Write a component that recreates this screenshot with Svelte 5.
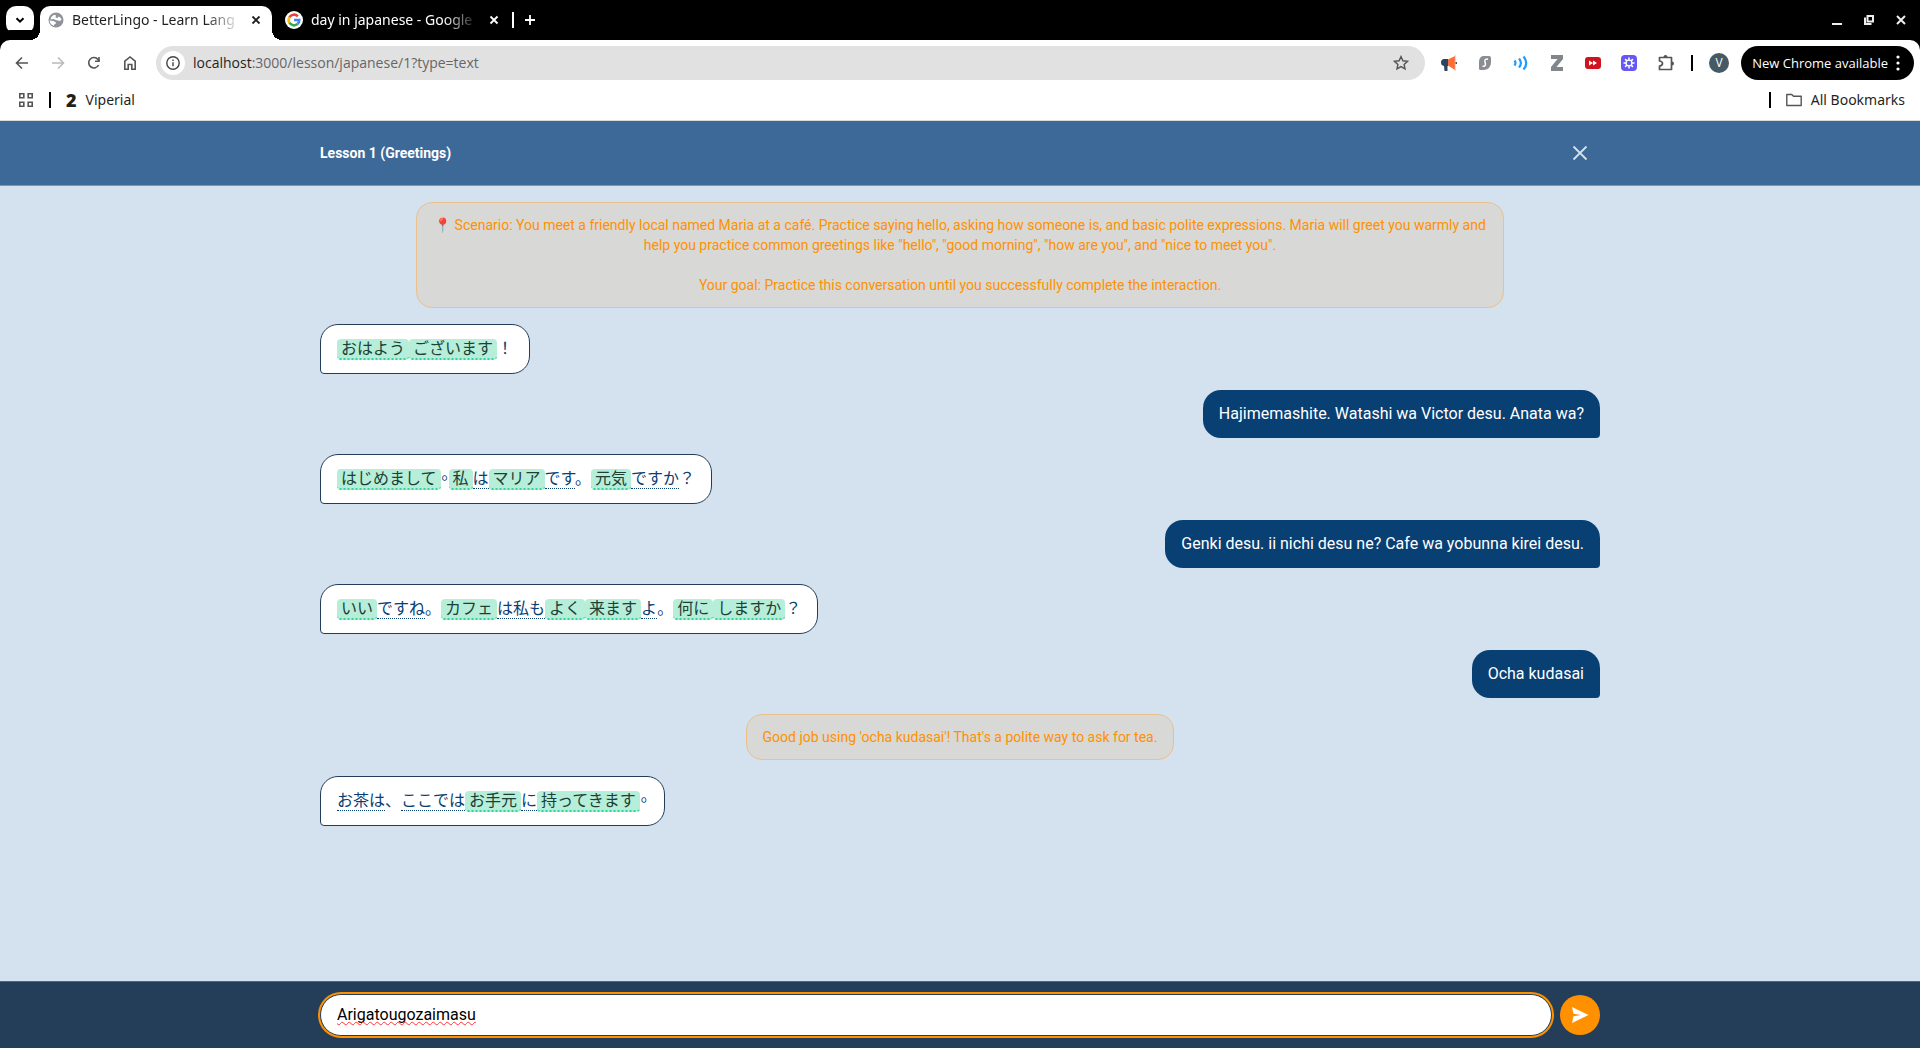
<script>
let draft = 'Arigatougozaimasu';

const bookmarks = ['Viperial'];

// kind: 'word' is a dotted word, 'known' a highlighted one, 'mark' punctuation
const w = text => ({ kind: 'word', text });
const k = text => ({ kind: 'known', text });
const m = text => ({ kind: 'mark', text });
// centred, half width full stop
const stop = { kind: 'stop', text: '。', lang: 'zh-TW' };

const messages = [
    { from: 'system', text: '📍 Scenario: You meet a friendly local named Maria at a café. Practice saying hello, asking how someone is, and basic polite expressions. Maria will greet you warmly and help you practice common greetings like "hello", "good morning", "how are you", and "nice to meet you".\n\nYour goal: Practice this conversation until you successfully complete the interaction.' },
    { from: 'bot', parts: [k('おはよう'), k('ございます'), m('！')] },
    { from: 'user', text: 'Hajimemashite. Watashi wa Victor desu. Anata wa?' },
    { from: 'bot', parts: [k('はじめまして'), stop, k('私'), w('は'), k('マリア'), w('です'), m('。'), k('元気'), w('ですか'), m('？')] },
    { from: 'user', text: 'Genki desu. ii nichi desu ne? Cafe wa yobunna kirei desu.' },
    { from: 'bot', parts: [k('いい'), w('ですね'), m('。'), k('カフェ'), w('は私も'), k('よく'), k('来ます'), w('よ'), m('。'), k('何に'), k('しますか'), m('？')] },
    { from: 'user', text: 'Ocha kudasai' },
    { from: 'system', text: "Good job using 'ocha kudasai'! That's a polite way to ask for tea." },
    { from: 'bot', parts: [w('お茶は'), m('、'), w('ここでは'), k('お手元'), w('に'), k('持ってきます'), stop] },
];

function send () {
    draft = '';
}
</script>

<div class="window">
    <div class="tabs">
        <button class="tab-search" aria-label="Search tabs">
            <svg width="12" height="12" viewBox="0 0 12 12"><path d="M2.5 4.2 6 7.7l3.5-3.5" fill="none" stroke="#000" stroke-width="2"/></svg>
        </button>
        <div class="tab active">
            <svg width="16" height="16" viewBox="0 0 16 16">
                <circle cx="8" cy="8" r="7.5" fill="#8e9299"/>
                <path d="M2.500 7.500Q3 4 6.500 2.800L8 3.500 7.500 5.500l2 .5 1-1.500L13 6l.5 2-2 1-1.500-.5-2.500-.5L6 7z" fill="#fff"/>
                <path d="M1.500 8.500 5.500 9l2.500 1.500-.5 1.500-1.500.5V14Q2 12.500 1.500 8.500z" fill="#fff"/>
            </svg>
            <span class="tab-title">BetterLingo - Learn Lang</span>
            <button class="tab-close" aria-label="Close tab">
                <svg width="10" height="10" viewBox="0 0 10 10"><path d="m1.500 1.500 7 7m0-7-7 7" stroke="currentColor" stroke-width="1.800"/></svg>
            </button>
        </div>
        <div class="tab">
            <svg width="18" height="18" viewBox="0 0 18 18">
                <circle cx="9" cy="9" r="9" fill="#fff"/>
                <g fill="none" stroke-width="2.600">
                    <path d="M4.400 6.300A5.300 5.300 0 0 1 12.800 5.300" stroke="#ea4335"/>
                    <path d="M4.400 11.700a5.300 5.300 0 0 1 0-5.400" stroke="#fbbc05"/>
                    <path d="M12.600 12.900a5.300 5.300 0 0 1-8.200-1.200" stroke="#34a853"/>
                    <path d="M9 9h5.300a5.300 5.300 0 0 1-1.700 3.900" stroke="#4285f4"/>
                </g>
            </svg>
            <span class="tab-title">day in japanese - Google</span>
            <button class="tab-close" aria-label="Close tab">
                <svg width="10" height="10" viewBox="0 0 10 10"><path d="m1.500 1.500 7 7m0-7-7 7" stroke="currentColor" stroke-width="1.800"/></svg>
            </button>
        </div>
        <span class="rule light"></span>
        <button class="new-tab" aria-label="New tab">
            <svg width="12" height="12" viewBox="0 0 12 12"><path d="M6 1v10M1 6h10" stroke="#fff" stroke-width="1.800"/></svg>
        </button>
        <div class="controls">
            <button aria-label="Minimize"><svg width="12" height="12" viewBox="0 0 12 12"><path d="M1 10h10" stroke="#eee" stroke-width="2"/></svg></button>
            <button aria-label="Restore"><svg width="12" height="12" viewBox="0 0 12 12"><path d="M4.500 2H10v5.500H4.500zM2 3.500V10h6.500" fill="none" stroke="#eee" stroke-width="2"/></svg></button>
            <button aria-label="Close window"><svg width="12" height="12" viewBox="0 0 12 12"><path d="m2 2 8 8m0-8-8 8" stroke="#eee" stroke-width="2"/></svg></button>
        </div>
    </div>

    <div class="toolbar">
        <div class="nav">
            <button aria-label="Back"><svg width="16" height="16" viewBox="0 0 16 16"><path d="M14 8H3m5-5.500L2.500 8 8 13.500" fill="none" stroke="#555" stroke-width="1.600"/></svg></button>
            <button aria-label="Forward"><svg width="16" height="16" viewBox="0 0 16 16"><path d="M2 8h11M8 2.500 13.500 8 8 13.500" fill="none" stroke="#bbb" stroke-width="1.600"/></svg></button>
            <button aria-label="Reload"><svg width="16" height="16" viewBox="0 0 16 16"><path d="M12.600 10A5.200 5.200 0 1 1 12 4.500L13.200 6" fill="none" stroke="#555" stroke-width="1.600"/><path d="M13.800 2v5H9V5.600h3.200V2z" fill="#555"/></svg></button>
            <button aria-label="Home"><svg width="16" height="16" viewBox="0 0 16 16"><path d="M2.800 6.200 8 2l5.200 4.200v8H9.800V9.500H6.200v4.700H2.800z" fill="none" stroke="#555" stroke-width="1.600"/></svg></button>
        </div>
        <div class="address">
            <span class="site-info">
                <svg width="14" height="14" viewBox="0 0 14 14"><circle cx="7" cy="7" r="6.200" fill="none" stroke="#444" stroke-width="1.400"/><path d="M7 6.200v4M7 3.600V5" stroke="#444" stroke-width="1.400"/></svg>
            </span>
            <span class="url"><b>localhost</b>:3000/lesson/japanese/1?type=text</span>
            <svg width="16" height="16" viewBox="0 0 16 16"><path d="m8 1.600 1.900 4.200 4.600.5-3.400 3.100.9 4.500L8 11.600l-4 2.300.9-4.500L1.500 6.300l4.600-.5z" fill="none" stroke="#555" stroke-width="1.400"/></svg>
        </div>
        <div class="extensions">
            <svg width="16" height="16" viewBox="0 0 16 16"><path d="M2.500 4H7v7H6.500v5H3.500L3 11Q0 10.500 0 7.500T2.500 4z" fill="#2b4560"/><path d="M7 4.500 14 1v14l-7-4.500z" fill="#ff6b35"/><path d="M14.300 0v16" stroke="#ffc9b5"/><circle cx="15.300" cy="8" r="1" fill="#2b4560"/></svg>
            <svg width="16" height="16" viewBox="0 0 16 16"><path d="M6 1h6q2 0 2 2v4q0 7-7 8H3.500Q2 15 2 13.500V7q0-5 4-6z" fill="#8a8d91"/><path d="M11 4.200Q7.800 3.600 7.800 6L8.500 9q0 2.500-3 2.200" fill="none" stroke="#fff" stroke-width="1.500"/></svg>
            <svg width="16" height="16" viewBox="0 0 16 16"><path d="M1.500 5.500q2 2.500 0 5M6 3.500q3.800 4.500 0 9M10.500 1.500q5.500 6.500 0 13" fill="none" stroke="#1f9bff" stroke-width="2.200"/></svg>
            <svg width="16" height="16" viewBox="0 0 16 16"><path d="M2 0h12v4L7.500 12H14v4H2v-4l6.500-8H2z" fill="#80868b"/></svg>
            <svg width="16" height="16" viewBox="0 0 16 16"><rect y="2" width="16" height="12" rx="3" fill="#cf1420"/><path d="M4 5.500 8 8l-4 2.500zM8 5.500 12 8l-4 2.500z" fill="#fff"/></svg>
            <svg width="16" height="16" viewBox="0 0 16 16"><rect width="16" height="16" rx="4" fill="#6558f5"/><path d="M8 2.500v11M2.500 8h11M4.100 4.100l7.800 7.800m0-7.800-7.800 7.800" stroke="#fff" stroke-width="1.500"/><circle cx="8" cy="8" r="2.900" fill="#6558f5" stroke="#fff" stroke-width="1.300"/></svg>
            <svg width="18" height="18" viewBox="0 0 18 18"><path d="M2.500 3.500H14.500V15.500H2.500V12Q5.500 11.500 5.500 9.500T2.500 7z" fill="none" stroke="#555" stroke-width="1.700" stroke-linejoin="round"/><path d="M6.500 3a2 2 0 0 1 4 0zM15 7.500a2 2 0 0 1 0 4z" fill="#555"/></svg>
        </div>
        <span class="rule"></span>
        <span class="avatar">V</span>
        <button class="update">
            New Chrome available
            <svg width="4" height="16" viewBox="0 0 4 16"><g fill="#fff"><circle cx="2" cy="2" r="1.600"/><circle cx="2" cy="8" r="1.600"/><circle cx="2" cy="14" r="1.600"/></g></svg>
        </button>
    </div>

    <div class="bookmarks">
        <svg width="16" height="16" viewBox="0 0 16 16"><path d="M1.800 1.800h4v4h-4zM10.200 1.800h4v4h-4zM1.800 10.200h4v4h-4zM10.200 10.200h4v4h-4z" fill="none" stroke="#555" stroke-width="1.600"/></svg>
        <span class="rule"></span>
        {#each bookmarks as name}
            <a href="#{name}"><strong>2</strong>{name}</a>
        {/each}
        <span class="rule end"></span>
        <a href="#all">
            <svg width="16" height="14" viewBox="0 0 16 14"><path d="M.8 1.500h5l1.700 1.700h7.700v9.300H.8z" fill="none" stroke="#555" stroke-width="1.400" stroke-linejoin="round"/></svg>
            All Bookmarks
        </a>
    </div>

    <header>
        <div class="container">
            <h1>Lesson 1 (Greetings)</h1>
            <button class="leave" aria-label="Close lesson">
                <svg width="24" height="24" viewBox="0 0 24 24"><path d="m5.500 5.500 13 13m0-13-13 13" stroke="#d4e1ef" stroke-width="1.800"/></svg>
            </button>
        </div>
    </header>

    <main>
        <div class="container chat">
            {#each messages as message}
                {#if message.parts}
                    <p class="bubble bot" lang="ja">{#each message.parts as part}<span class={part.kind} lang={part.lang}>{part.text}</span>{/each}</p>
                {:else}
                    <p class="bubble {message.from}">{message.text}</p>
                {/if}
            {/each}
        </div>
    </main>

    <footer>
        <form class="container" on:submit|preventDefault={send}>
            <div class="field">
                <input type="text" aria-label="Your message" spellcheck="false" bind:value={draft}>
                <span class="spelling" aria-hidden="true">{draft}</span>
            </div>
            <button class="send" aria-label="Send">
                <svg width="18" height="18" viewBox="0 0 18 18"><path d="M1 1 17.500 9 1 17l1.500-6.800L10 9 2.500 7.800z" fill="#fff"/></svg>
            </button>
        </form>
    </footer>
</div>

<style>
    :global(body) { margin: 0; }
    .window {
        display: flex;
        flex-direction: column;
        min-height: 100vh;
        background: #d4e1ef;
        font-family: Roboto, "Noto Sans CJK JP", sans-serif;
        font-size: 16px;
        line-height: 24px;
    }
    .window * { box-sizing: border-box; }
    svg { flex: none; display: block; }
    button {
        display: flex;
        align-items: center;
        justify-content: center;
        padding: 0;
        border: none;
        background: none;
        font: inherit;
        color: inherit;
        cursor: pointer;
    }

    .tabs, .toolbar, .bookmarks {
        display: flex;
        align-items: center;
        font-family: "Noto Sans", sans-serif;
        font-size: 14px;
        line-height: 20px;
        color: #1f1f1f;
    }
    .tabs {
        height: 40px;
        padding: 6px 13px 0 6px;
        background: #000;
    }
    .tab-search {
        width: 28px;
        height: 28px;
        margin: 0 6px 6px 0;
        border-radius: 10px;
        background: #fff;
    }
    .tab {
        display: flex;
        align-items: center;
        gap: 8px;
        width: 232px;
        height: 34px;
        padding: 0 9px 6px 8px;
        color: #fff;
        position: relative;
    }
    .tab + .tab { padding: 0 3px 6px 13px; }
    .tab.active {
        border-radius: 10px 10px 0 0;
        background: #fff;
        color: #1f1f1f;
    }
    .tab.active::before, .tab.active::after {
        content: '';
        position: absolute;
        bottom: 0;
        width: 10px;
        height: 10px;
    }
    .tab.active::before {
        right: 100%;
        background: radial-gradient(circle at 0 0, transparent 10px, #fff 10px);
    }
    .tab.active::after {
        left: 100%;
        background: radial-gradient(circle at 100% 0, transparent 10px, #fff 10px);
    }
    .tab-title {
        flex: 1;
        white-space: nowrap;
        mask-image: linear-gradient(to right, #000 calc(100% - 36px), transparent);
    }
    .tab-close { width: 14px; height: 16px; }
    .rule {
        flex: none;
        width: 2px;
        height: 16px;
        background: #000;
    }
    .rule.light {
        margin: 0 10px 6px 8px;
        background: #fff;
    }
    .new-tab { margin-bottom: 6px; }
    .controls {
        display: flex;
        gap: 20px;
        margin: 0 0 6px auto;
    }

    .toolbar {
        height: 46px;
        padding: 6px 6px 6px 4px;
        border-radius: 10px 10px 0 0;
        background: #fff;
        box-shadow: 0 -10px #000;
        font-family: "Open Sans", sans-serif;
    }
    .nav { display: flex; }
    .nav button { width: 36px; height: 34px; }
    .address {
        display: flex;
        flex: 1;
        align-items: center;
        gap: 8px;
        height: 34px;
        margin-left: 8px;
        padding: 0 16px 0 5px;
        border-radius: 17px;
        background: #e1e1e1;
    }
    .site-info {
        display: flex;
        align-items: center;
        justify-content: center;
        width: 24px;
        height: 24px;
        border-radius: 50%;
        background: #fff;
    }
    .url { flex: 1; color: #666; }
    .url b { font-weight: 400; color: #1f1f1f; }
    .extensions {
        display: flex;
        align-items: center;
        gap: 20px;
        margin: 0 16px;
    }
    .avatar {
        width: 20px;
        height: 20px;
        margin: 0 12px 0 16px;
        border-radius: 50%;
        background: #455a64;
        font-size: 12px;
        text-align: center;
        color: #fff;
    }
    .update {
        gap: 8px;
        height: 34px;
        padding: 0 14px 0 11px;
        border-radius: 17px;
        background: #000;
        font-size: 13px;
        color: #fff;
    }

    .bookmarks {
        height: 35px;
        gap: 15px;
        padding: 0 15px 6px 18px;
        border-bottom: 1px solid #dadada;
        background: #fff;
    }
    .bookmarks a {
        display: flex;
        align-items: center;
        gap: 9px;
        color: inherit;
        text-decoration: none;
    }
    .bookmarks strong {
        font-size: 18px;
        font-weight: 900;
    }
    .bookmarks .rule.end { margin-left: auto; }

    .container {
        width: 100%;
        max-width: 1280px;
        margin: 0 auto;
    }
    header {
        padding: 12px 0;
        border-bottom: 1px solid #7299c6;
        background: #3d6998;
    }
    header .container {
        display: flex;
        align-items: center;
        justify-content: space-between;
    }
    h1 {
        margin: 0;
        font-size: 14px;
        line-height: 20px;
        font-weight: 700;
        color: #fff;
    }
    .leave { width: 40px; height: 40px; }

    main { flex: 1; padding: 16px 0; }
    .chat {
        display: flex;
        flex-direction: column;
        gap: 16px;
    }
    .bubble {
        max-width: 85%;
        margin: 0;
        padding: 12px 16px;
        border-radius: 18px;
    }
    .system {
        align-self: center;
        border: 1px solid #ecc08c;
        border-radius: 16px;
        background: #d8d8d6;
        font-size: 14px;
        line-height: 20px;
        text-align: center;
        white-space: pre-wrap;
        color: #ff9100;
    }
    .user {
        align-self: flex-end;
        border-bottom-right-radius: 4px;
        background: #094074;
        color: #fff;
    }
    .bot {
        align-self: flex-start;
        border: 1px solid #243e59;
        border-bottom-left-radius: 4px;
        background: #fff;
        color: #094074;
        text-spacing-trim: space-all;
    }
    .word { border-bottom: 1px dotted #094074; }
    .known {
        padding: 0 4px;
        border-bottom: 2px dotted #34d399;
        border-radius: 4px;
        background: #b6eed9;
        color: #1c4034;
    }
    .stop {
        font-family: "Noto Sans CJK TC", sans-serif;
        font-feature-settings: "halt";
        line-height: 1;
    }

    footer {
        padding: 12px 0;
        border-top: 1px solid #3d6998;
        background: #243e59;
    }
    form {
        display: flex;
        align-items: center;
        gap: 8px;
    }
    .field {
        display: flex;
        flex: 1;
        position: relative;
    }
    input {
        flex: 1;
        height: 42px;
        padding: 0 16px 2px;
        border: 1px solid #243e59;
        border-radius: 21px;
        outline: 2px solid #ff9100;
        background: #fff;
        font: inherit;
        color: #000;
    }
    /* red squiggle laid over the typed word */
    .spelling {
        position: absolute;
        top: 8px;
        left: 17px;
        color: transparent;
        text-decoration: underline wavy #f33 1px;
        text-decoration-skip-ink: none;
        text-underline-offset: 2px;
        pointer-events: none;
    }
    .send {
        width: 40px;
        height: 40px;
        border-radius: 50%;
        background: #ff9100;
    }
</style>
